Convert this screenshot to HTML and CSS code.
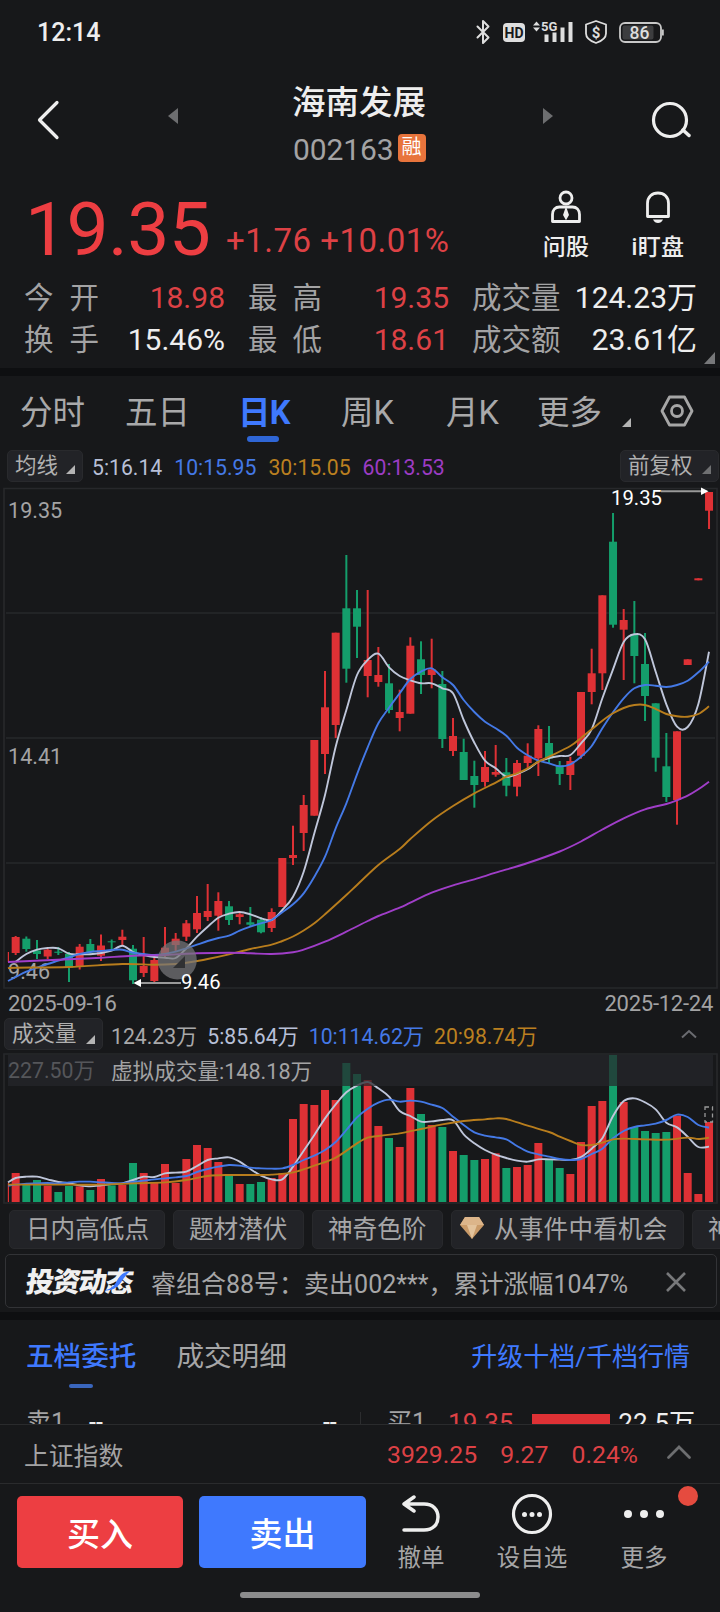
FILE: index.html
```html
<!DOCTYPE html>
<html lang="zh-CN">
<head>
<meta charset="utf-8">
<title>海南发展 002163</title>
<link rel="stylesheet" href="styles.css">
</head>
<body>
<div class="screen">
  <header class="status">
    <span class="clock">12:14</span>
    <svg class="status-icons" width="194" height="40" viewBox="474 12 194 40">
      <path d="M477.500 26.500l11 11-5.500 5.500V21l5.500 5.500-11 11" fill="none" stroke="#dedede" stroke-width="2" stroke-linejoin="round" stroke-linecap="round"/>
      <rect x="503" y="23" width="22" height="19" rx="4" fill="#dedede"/>
      <text x="514" y="38" text-anchor="middle" class="hd">HD</text>
      <path d="M533 25.500l3.500-4 3.500 4zM533 27.500h7l-3.500 4z" fill="#dedede"/>
      <text x="541" y="31" class="g5">5G</text>
      <path d="M544.500 34.500h4v7.500h-4zM552.500 32.500h4v9.500h-4zM560.500 27.500h4v14.500h-4zM568.500 22h4v20h-4z" fill="#dedede"/>
      <path d="M596 21l10 3.500v9c0 4.500-4 7.500-10 9.500-6-2-10-5-10-9.500v-9z" fill="none" stroke="#dedede" stroke-width="1.800" stroke-linejoin="round"/>
      <text x="596" y="38" text-anchor="middle" class="dollar">$</text>
      <rect x="620" y="23" width="41" height="19" rx="5" fill="none" stroke="#c8c8c8" stroke-width="1.800"/>
      <rect x="622.500" y="25.500" width="31" height="14" rx="2" fill="#3c3d3f"/>
      <path d="M662.800 29.500v6" stroke="#c8c8c8" stroke-width="2"/>
      <text x="639.500" y="39" text-anchor="middle" class="batt">86</text>
    </svg>
  </header>

  <nav class="topbar">
    <svg class="back" width="24" height="42" viewBox="0 0 24 42"><path d="M20 3.500L2.500 21 20 38.500" fill="none" stroke="#eee" stroke-width="3.200" stroke-linecap="round" stroke-linejoin="round"/></svg>
    <svg class="prev" width="10" height="16" viewBox="0 0 10 16"><path d="M10 0v16L0 8z" fill="#6d6e70"/></svg>
    <div class="title">
      <h1>海南发展</h1>
      <div class="code"><span>002163</span><b>融</b></div>
    </div>
    <svg class="next" width="10" height="16" viewBox="0 0 10 16"><path d="M0 0v16l10-8z" fill="#6d6e70"/></svg>
    <svg class="search" width="42" height="40" viewBox="0 0 42 40"><circle cx="19" cy="19" r="16.500" fill="none" stroke="#eee" stroke-width="3.200"/><path d="M32 29l6 5.500" stroke="#eee" stroke-width="3.500" stroke-linecap="round"/></svg>
  </nav>

  <section class="quote">
    <span class="price">19.35</span>
    <span class="change">+1.76 +10.01%</span>
    <div class="act ask">
      <svg width="32" height="34" viewBox="0 0 32 34" fill="none" stroke="#eee" stroke-width="2.800"><circle cx="16" cy="8" r="6"/><path d="M2.500 31.500v-7c0-5 3-7.500 7-7.500h13c4 0 7 2.500 7 7.500v7z" stroke-linejoin="round"/><path d="M16 19l2 6-2 3.500-2-3.500z" fill="#eee" stroke-width="1.800"/></svg>
      <span>问股</span>
    </div>
    <div class="act eye">
      <svg width="32" height="34" viewBox="0 0 32 34"><path d="M5.500 26.500V13.500C5.500 7 10 3 16 3s10.500 4 10.500 10.500v13z" fill="none" stroke="#eee" stroke-width="2.800" stroke-linejoin="round"/><path d="M11 29.500h10c-1 2.500-3 3.500-5 3.500s-4-1-5-3.500z" fill="#eee"/></svg>
      <span>i盯盘</span>
    </div>
  </section>

  <section class="stats">
    <span class="k">今<i></i>开</span><span class="v up">18.98</span><span class="k">最<i></i>高</span><span class="v up">19.35</span><span class="k">成交量</span><span class="v">124.23万</span>
    <span class="k">换<i></i>手</span><span class="v">15.46%</span><span class="k">最<i></i>低</span><span class="v up">18.61</span><span class="k">成交额</span><span class="v">23.61亿</span>
    <svg class="corner" width="11" height="12" viewBox="0 0 11 12"><path d="M11 0v12H0z" fill="#77787a"/></svg>
  </section>

  <nav class="periods">
    <a>分时</a><a>五日</a><a class="on">日K</a><a>周K</a><a>月K</a><a class="more">更多</a>
    <svg class="tri" width="9" height="9" viewBox="0 0 9 9"><path d="M9 0v9H0z" fill="#b4b4b4"/></svg>
    <svg class="hex" width="34" height="32" viewBox="0 0 34 32" fill="none" stroke="#a6a6a6" stroke-width="2.800"><path d="M9.500 2h15L32 16l-7.500 14h-15L2 16z" stroke-linejoin="round"/><circle cx="17" cy="16" r="5.500"/></svg>
  </nav>

  <div class="legend ma">
    <span class="pill">均线<svg width="9" height="9" viewBox="0 0 9 9"><path d="M9 0v9H0z" fill="#b4b4b4"/></svg></span>
    <span class="c5">5:16.14</span><span class="c10">10:15.95</span><span class="c30">30:15.05</span><span class="c60">60:13.53</span>
    <span class="pill adj">前复权<svg width="9" height="9" viewBox="0 0 9 9"><path d="M9 0v9H0z" fill="#6f7072"/></svg></span>
  </div>

  <svg class="kchart" id="kchart" width="720" height="509" viewBox="0 484 720 509"></svg>

  <div class="dates"><span>2025-09-16</span><span>2025-12-24</span></div>

  <div class="legend vol">
    <span class="pill">成交量<svg width="9" height="9" viewBox="0 0 9 9"><path d="M9 0v9H0z" fill="#b4b4b4"/></svg></span>
    <span>124.23万</span><span class="c5">5:85.64万</span><span class="c10">10:114.62万</span><span class="c30">20:98.74万</span>
    <svg class="fold" width="18" height="10" viewBox="0 0 18 10"><path d="M2 8.500l7-6.500 7 6.500" fill="none" stroke="#6a6b70" stroke-width="2"/></svg>
  </div>

  <svg class="vchart" id="vchart" width="720" height="153" viewBox="0 1052 720 153"></svg>

  <div class="tags">
    <span class="w5">日内高低点</span><span>题材潜伏</span><span>神奇色阶</span><span class="gem"><svg width="24" height="22" viewBox="0 0 24 22"><path d="M5 0h14l5 8-12 14L0 8z" fill="#c99a68"/><path d="M5 0h14l5 8H0z" fill="#dcb58a"/><path d="M7 8h10l-5 14z" fill="#e3c39c"/></svg>从事件中看机会</span><span>神奇九转</span>
  </div>

  <div class="news">
    <span class="logo">投资动态<svg width="24" height="22" viewBox="0 0 24 22"><path d="M0 20.500C8 19 10 15 12 10c2-5 5-8 11.500-9-4 4-5 7-8 12-3 5-7 7.500-15.500 7.500z" fill="#3f79fe"/></svg></span>
    <span class="msg">睿组合88号：卖出002***，累计涨幅1047%</span>
    <svg width="20" height="20" viewBox="0 0 20 20"><path d="M1 1l18 18M19 1L1 19" stroke="#77787a" stroke-width="2.600"/></svg>
  </div>

  <section class="book">
    <div class="booktabs"><a class="on">五档委托</a><a>成交明细</a><a class="link">升级十档/千档行情</a></div>
    <div class="level">
      <div class="half ask1"><span>卖1</span><em>--</em><em class="qty">--</em></div>
      <i class="rule"></i>
      <div class="half bid1"><span>买1</span><em class="up">19.35</em><i class="bar"></i><em>22.5万</em></div>
    </div>
  </section>

  <div class="index"><span>上证指数</span><b>3929.25</b><b>9.27</b><b>0.24%</b><svg width="26" height="16" viewBox="0 0 26 16"><path d="M2.500 13.500L13 3l10.500 10.500" fill="none" stroke="#6d6e70" stroke-width="2.800" stroke-linecap="round"/></svg></div>

  <footer class="dock">
    <button class="buy">买入</button><button class="sell">卖出</button>
    <div class="item undo"><svg width="42" height="42" viewBox="0 0 42 42" fill="none" stroke="#eee" stroke-width="3.500" stroke-linecap="round" stroke-linejoin="round"><path d="M14 4L4 11l10 7M5 11h19c9 0 14 5.500 14 13s-5 13-14 13H4"/></svg><span>撤单</span></div>
    <div class="item fav"><svg width="42" height="42" viewBox="0 0 42 42"><circle cx="21" cy="21" r="18.500" fill="none" stroke="#eee" stroke-width="3.200"/><circle cx="13.500" cy="21.500" r="2.500" fill="#eee"/><circle cx="21" cy="21.500" r="2.500" fill="#eee"/><circle cx="28.500" cy="21.500" r="2.500" fill="#eee"/></svg><span>设自选</span></div>
    <div class="item etc"><svg width="42" height="42" viewBox="0 0 42 42" fill="#eee"><circle cx="5" cy="21" r="4"/><circle cx="21" cy="21" r="4"/><circle cx="37" cy="21" r="4"/></svg><span>更多</span><i class="dot"></i></div>
  </footer>
  <div class="home"></div>
</div>
<script src="chart.js"></script>
</body>
</html>
```

FILE: styles.css
```css
* { box-sizing: border-box; }
body {
  margin: 0;
  background: #17181a;
  color: #eee;
  font-family: Roboto, "Noto Sans CJK SC", sans-serif;
}
.screen { width: 720px; height: 1612px; overflow: hidden; display: flex; flex-direction: column; background: #17181a; }
.screen > * { flex-shrink: 0; }
i, em { font-style: normal; }
svg { display: block; flex-shrink: 0; }

.status { height: 64px; display: flex; justify-content: space-between; padding: 0 52px 0 37px; }
.clock { font-size: 25px; font-weight: 500; line-height: 66px; }
.status-icons { margin-top: 12px; }
.status text { font-family: Roboto, sans-serif; font-weight: 700; }
.hd { font-size: 14px; fill: #17181a; }
.g5 { font-size: 13px; fill: #dedede; }
.dollar { font-size: 15px; fill: #dedede; }
.status .batt { font-size: 17.500px; font-weight: 500; fill: #dedede; }

.topbar { height: 118px; display: flex; align-items: flex-start; }
.back { margin: 35px 0 0 37px; }
.prev { margin: 44px 0 0 107px; }
.title { width: 134px; margin-left: 115px; }
.title h1 { margin: 17px 0 0 -1px; font-size: 33.5px; font-weight: 500; line-height: 44px; white-space: nowrap; }
.code { display: flex; align-items: center; gap: 4px; margin-top: 8px; height: 32px; color: #a3a3a4; font-size: 30px; letter-spacing: -.1px; }
.code b { width: 28px; height: 28px; border-radius: 4px; background: #e8743c; color: #fff; font-size: 20px; font-weight: 400; line-height: 27px; text-align: center; margin-top: -2px; }
.next { margin: 44px 0 0 116px; }
.search { margin: 37px 0 0 98px; }

.quote { height: 90px; display: flex; align-items: flex-start; color: #ed3e42; white-space: nowrap; }
.price { width: 190px; margin-left: 25px; font-size: 75px; line-height: 94px; letter-spacing: -.6px; }
.change { width: 322px; margin-left: 11px; margin-top: 39px; font-size: 33px; line-height: 40px; letter-spacing: .5px; color: #dd4145; }
.act { display: flex; flex-direction: column; align-items: center; color: #eee; font-size: 23px; font-weight: 500; line-height: 30px; padding-top: 8px; }
.act svg { margin-bottom: 9px; }
.act.ask { width: 36px; }
.act.eye { width: 60px; margin-left: 44px; }
.act span { white-space: nowrap; margin: 0 -20px; letter-spacing: .3px; }

.stats { position: relative; height: 96px; padding: 5px 23px 0 24px; display: grid; grid-template-columns: 76px 125px 99px 125px 115px 133px; grid-template-rows: 42px 42px; line-height: 42px; font-size: 30px; white-space: nowrap; }
.stats .k { color: #a3a3a4; font-size: 29.500px; display: flex; }
.stats .k i { width: 16px; }
.stats .k:nth-child(6n+3) { padding-left: 23px; }
.stats .k:nth-child(6n+3) i { width: 15px; }
.stats .k:nth-child(6n+5) { padding-left: 23px; }
.stats .v { text-align: right; justify-self: end; }
.up { color: #dd4145; }
.corner { position: absolute; right: 5px; bottom: 4px; }

.periods { height: 82px; border-top: 8px solid #0e0f11; display: grid; grid-template-columns: 106px 114px 102px 106px 90px 104px 38px 60px; align-items: start; color: #a9a9aa; font-size: 32.500px; line-height: 74px; white-space: nowrap; }
.periods a:nth-child(1) { padding-left: 20px; }
.periods a:nth-child(2) { padding-left: 19px; }
.periods a:nth-child(3) { padding-left: 18px; }
.periods a:nth-child(4) { padding-left: 19px; }
.periods a:nth-child(5) { padding-left: 18px; }
.periods a:nth-child(6) { padding-left: 19px; }
.periods .on { color: #3f79fe; font-weight: 700; letter-spacing: -.7px; }
.periods .on::after { content: ""; display: block; width: 32px; height: 6px; margin: -14px 0 0 9px; border-radius: 3px; background: #2f66d6; }
.periods .tri { margin: 42px 0 0 0; }
.periods .hex { margin: 19px 0 0 0; }

.legend { display: flex; align-items: flex-start; font-size: 21.200px; white-space: nowrap; color: #a9a9aa; }
.legend .pill { display: flex; align-items: center; justify-content: space-between; background: #222327; border: 1px solid #292a2d; border-radius: 5px; color: #b0b0b0; font-size: 21.500px; }
.legend .pill svg { margin-top: 6px; }
.c5 { color: #b8c0d8; } .c10 { color: #4479e6; } .c30 { color: #bb8020; } .c60 { color: #9c3cc4; }
.ma { height: 34px; padding: 0 1px 0 7px; gap: 12px; line-height: 36px; }
.ma .pill { height: 32px; width: 76px; padding: 0 7px; line-height: 30px; margin-right: -3px; }
.ma .adj { width: 99px; margin: 0 0 0 auto; }

.dates { height: 25px; display: flex; justify-content: space-between; padding: 0 7px 0 8px; font-size: 22px; line-height: 22px; color: #a3a3a4; letter-spacing: -.25px; }
.vol { height: 34px; padding-left: 4px; gap: 10px; line-height: 37px; }
.vol .pill { width: 99px; height: 32px; line-height: 30px; padding: 0 7px; margin-right: -2px; }
.vol .fold { margin: 11px 22px 0 auto; }
.vol .pill svg { margin-top: 10px; }

.tags { height: 49px; padding: 5px 0 0 9px; display: flex; gap: 8px; overflow: hidden; }
.tags span { width: 131px; height: 39px; flex-shrink: 0; padding: 0 0 0 15px; border-radius: 5px; background: #222327; border: 1px solid #28292c; color: #a6a6a7; font-size: 24.600px; line-height: 37px; white-space: nowrap; }
.tags .w5 { width: 156px; padding-left: 16px; }
.tags .gem { display: flex; width: 233px; padding: 0 0 0 8px; letter-spacing: .2px; }
.tags .gem svg { margin: 6px 10px 0 0; }

.news { height: 54px; margin: 0 3px 4px 5px; border: 1.500px solid #323336; border-radius: 5px; display: flex; align-items: center; color: #a6a6a7; padding: 2px 28px 0 20px; }
.logo { position: relative; width: 110px; margin-top: 2px; font-size: 28px; font-weight: 900; color: #f0f0f0; letter-spacing: -1.600px; transform: skewX(-8deg); white-space: nowrap; line-height: 36px; }
.logo svg { position: absolute; left: 79px; top: 5px; }
.msg { margin-left: 15px; width: 515px; font-size: 25px; white-space: nowrap; }

.book { height: 112px; border-top: 8px solid #0e0f11; overflow: hidden; }
.booktabs { display: flex; height: 74px; padding: 0 30px 0 26px; font-size: 27.600px; line-height: 74px; color: #a6a6a7; white-space: nowrap; }
.booktabs a + a { margin-left: 40px; }
.booktabs .on { color: #3f79fe; font-weight: 500; }
.booktabs .on::after { content: ""; display: block; width: 24px; height: 4px; border-radius: 2px; margin: -10px auto 0; background: #3a66bd; }
.booktabs a.link { margin-left: auto; color: #3f79fe; font-size: 26px; }
.level { display: flex; height: 50px; line-height: 58px; font-size: 25px; color: #a3a3a4; white-space: nowrap; }
.half { display: flex; width: 360px; padding-left: 26px; }
.ask1 em { color: #eee; margin-left: 24px; }
.ask1 .qty { margin-left: 220px; }
.rule { width: 1px; margin-top: 18px; background: #2c2d2f; }
.half.bid1 { width: 359px; padding: 0 25px 0 26px; }
.bid1 em { color: #eee; font-size: 26px; }
.bid1 em.up { color: #dd4145; margin-left: 22px; }
.bid1 .bar { width: 78px; height: 24px; margin: 20px 8px 0 auto; background: #de3135; }

.index { height: 60px; border-top: 1.500px solid #2a2b2d; border-bottom: 1.500px solid #2a2b2d; display: flex; align-items: center; padding: 0 28px 0 24px; color: #a3a3a4; font-size: 24.800px; white-space: nowrap; }
.index b { font-weight: 400; color: #dd4145; margin-left: 23px; }
.index span { margin-right: auto; }
.index svg { margin-left: 28px; margin-top: -4px; }

.dock { height: 108px; display: flex; padding: 12px 0 0 17px; }
.dock button { width: 166px; height: 72px; padding: 0; border: 0; border-radius: 5px; font: 500 33px Roboto, "Noto Sans CJK SC", sans-serif; color: #fff; }
.buy { background: #ed3e42; }
.sell { background: #3f79fe; margin-left: 16px; }
.dock .sell { width: 167px; }
.item { position: relative; width: 72px; display: flex; flex-direction: column; align-items: center; font-size: 23.500px; line-height: 32px; color: #a6a6a7; white-space: nowrap; }
.item svg { margin: -3px 0 7px; }
.item.undo { margin-left: 19px; }
.item.fav { margin-left: 39px; }
.item.etc { margin-left: 40px; }
.dot { position: absolute; left: 70px; top: -10px; width: 20px; height: 20px; border-radius: 50%; background: #e54b3f; }
.home { width: 240px; height: 6px; margin: 0 auto; border-radius: 3px; background: #8c8c8d; }

.axis { font-size: 21.600px; fill: #a3a3a4; }
.mark { font-size: 20.300px; fill: #fff; }
.dim { font-size: 21.300px; fill: #55565a; }
```

FILE: chart.js
```js
// Each candle: [direction, body top, body bottom, wick top, wick bottom, volume bar top]
const candles = [
  ['r',937,953,936,955,459],['g',938.7,949,936.5,951.7,493],['g',950.5,954,940,959,480],['r',949.7,956.5,949,959,497],
  ['g',951.7,952.8,947,955,516],['g',953.7,967.7,952,982,498],['r',946.7,966.7,944,969.5,499],['g',944,952.3,939,953.5,510],
  ['r',945.5,955.7,934.5,961,477],['g',941.3,942.3,939.5,949,496],['r',936.7,940,929.7,945,495],['g',948.7,980.3,945,984,429],
  ['r',966,973,937,977,459],['r',960,981,957,982.5,487],['r',947.7,955.7,927,957,432],['r',938.7,945,933,952,489],
  ['r',923.3,936.7,920,941,417],['r',913,929.3,896,933,375],['r',911,917,884,921,384],['r',901,915.7,892.3,930.7,426],
  ['g',906.3,920,901,925,467],['r',914.3,917,913,924.3,492],['g',922.3,924.7,907,926.7,492],['g',919.7,932.3,917,933.3,486],
  ['r',912,928,908.3,932,474],['r',858,907,858,907,460],['r',855,858,825.7,865,297],['r',805,833,795,851,252],
  ['r',740,815.7,740,815.7,255],['r',707.3,754,671,774,210],['r',632.7,725,632.7,738,240],['g',608.3,668.7,555,682.7,129],
  ['g',608.3,626.7,590,658,162],['r',660,676,590,697.3,180],['r',675,682,647,686.7,318],['g',683.3,710,664,713.3,354],
  ['r',712,718,689.7,731.3,381],['r',645.7,713.7,637.3,713.7,204],['g',659.3,675,641.3,694,282],['r',669.3,675,638.7,688.3,315],
  ['g',684,739,671,748,321],['r',736,751,718,756,393],['g',752,780,738.7,780,405],['g',776,785,760.7,807.7,420],
  ['r',767,782,751,786.7,417],['r',772,774.7,745,776.7,400],['g',772.3,785.7,758,796.3,444],['r',763,786.7,760,796.3,441],
  ['r',755.7,763,743.3,768.7,435],['r',729,758.3,725.3,776,369],['g',743,758.3,726,763.3,420],['g',765.3,774,761,785,444],
  ['r',761,775,756.7,790,462],['r',692,755.7,692,758.7,366],['r',673.3,692,648.7,704.3,258],['r',595.3,673.3,595.3,690,243],
  ['g',541.7,624.7,513,627.7,105],['r',620,629.7,609,680,246],['g',634.3,656,601,683.3,321],['g',664,696,633,721,333],
  ['g',703.3,757.7,703.3,771.7,339],['g',766.3,797,733,802,336],['r',731.3,800,731.3,824.7,287],['r',659.3,665,659.3,665,459],
  ['r',578.3,580.3,578.3,580.3,522],['r',492,510.7,492,529,306]
];
const RED = '#de3135', GREEN = '#149e6b';
const X = k => 15.67 + k * 10.667;

// Catmull-Rom smoothing through [index, y] pairs
function curve(pts, color) {
  const p = pts.map(([k, y]) => [k < 0 ? 8 : X(k), y]);
  let d = `M${p[0][0]} ${p[0][1]}`;
  for (let i = 0; i < p.length - 1; i++) {
    const a = p[i - 1] || p[i], b = p[i], c = p[i + 1], e = p[i + 2] || c;
    d += `C${b[0] + (c[0] - a[0]) / 6} ${b[1] + (c[1] - a[1]) / 6} ${c[0] - (e[0] - b[0]) / 6} ${c[1] - (e[1] - b[1]) / 6} ${c[0]} ${c[1]}`;
  }
  return `<path d="${d}" fill="none" stroke="${color}" stroke-width="1.9"/>`;
}
const seq = ys => ys.map((y, i) => [i - 1, y]);
const WHITE = '#bfc6da', BLUE = '#4479e6', ORANGE = '#b87d1d', PURPLE = '#a03ec8';

const ma5 = seq([965,961.7,954,949.7,948,948.3,953.7,954.3,954.3,953,950.7,945.7,952,955,957,957.7,958,948.3,936.7,926.7,917.7,913.7,912,914.3,918.3,920,910,896.7,871.7,833.3,795,746.7,710,675,660,653.7,667.3,676,680.3,683.3,683.3,688.3,693.3,720,742.7,760.7,768.3,776.7,774,769.3,761.7,758,756,755,743.3,729.3,698.3,669.3,642,634.3,639.3,671.7,704.3,726.7,727,704,651.7]).slice(1);
const ma10 = seq([981,977,971.7,967.7,964,960.7,957.3,954,952,951,950,949.7,952.7,954,955,954,951.7,948.3,944.7,941,938,935.7,930.7,926.7,923.3,920,912.3,904.3,893.3,876.7,856.7,828.3,803.3,774.3,747.3,723.3,707.7,693.3,679,671.7,668.3,677.3,685,700,712,721.7,728.3,735.7,747.7,755.3,760.7,763.3,766.3,764.3,756.7,746,728.3,712.3,698.3,688.3,685,685.7,687,685,680.7,672.3,661.7]);
const ma30 = [[-1,968.3],[0,967.7],[5,967],[10,964],[13,964.7],[15,964],[16,962.7],[17,961],[18,959],[20,954.3],[22,949],[24,944.7],[25,941],[26,936.5],[27,930.5],[28,923.3],[29,914.3],[31,895],[32,885],[34,865],[36,849],[37,839],[39,820.7],[41,806],[43,793.3],[45,782.7],[46,776.7],[47,773.3],[48,768.3],[49,761.7],[50,756.7],[52,746],[53,738],[54,729.3],[55,720.7],[56,713.3],[57,708],[58,705],[59,705],[60,709],[61,714],[62,716.3],[63,716.7],[64,714],[65,706.3]];
const ma60 = [[-1,962],[5,959.3],[8,957.7],[11,955.7],[14,955],[17,953.3],[20,952.7],[22,953.3],[24,954],[26,952.3],[27,949.7],[29,941.7],[31,931.7],[33,921],[34,916],[36,907.7],[37,902.7],[39,892.7],[41,885.3],[43,879.3],[45,872.7],[48,863],[51,851.5],[53,841.5],[55,829.5],[57,818.3],[59,809.3],[61,804],[62,800.3],[63,795.7],[64,789.3],[65,781.7]];

let k = `<g fill="none" stroke="#27282b" stroke-width="1.7"><path d="M4 488.5H717V988H4zM6 613H715M6 738H715M6 863H715"/></g>
<rect x="7.800" y="952" width="1.200" height="10" fill="${RED}"/>`;
candles.forEach(([c, t, b, wt, wb], i) => {
  const x = X(i), f = c === 'r' ? RED : GREEN;
  k += `<rect x="${x - 1}" y="${wt}" width="2" height="${wb - wt}" fill="${f}"/><rect x="${x - 4}" y="${t}" width="8" height="${b - t}" fill="${f}"/>`;
});
k += `<text x="8" y="518" class="axis">19.35</text><text x="8" y="764" class="axis">14.41</text><text x="8" y="979" class="axis">9.46</text>`;
k += curve(ma5, WHITE) + curve(ma10, BLUE) + curve(ma30, ORANGE) + curve(ma60, PURPLE);
k += `<circle cx="177.300" cy="960" r="19.500" fill="#77777a" fill-opacity=".72"/><path d="M185 956v12h-12z" fill="#303133"/>
<path d="M661 491.300H702" stroke="#999" stroke-width="2"/><path d="M701 487.500l7.500 3.800-7.500 3.800z" fill="#fff"/><text x="611" y="505" class="mark">19.35</text>
<path d="M140 983H181" stroke="#999" stroke-width="2"/><path d="M141 979l-7.500 4 7.500 4z" fill="#fff"/><text x="181" y="989" class="mark">9.46</text>`;
document.getElementById('kchart').innerHTML = k;

const V = y => 1020 + y / 3;
const vs = a => a.map(([i, y]) => [i, V(y)]);
const v5 = seq([487,474,470,470,478,486,490,496,499,496,492,490,480,470,471,460,458,455,438,420,415,412,425,447,467,478,478,440,392,345,295,253,217,197,186,205,230,273,288,305,304,300,301,343,370,390,404,414,422,425,418,418,419,420,411,386,355,288,243,235,247,268,308,322,350,381,380]);
const v10 = seq([497,494,491,490,489,490,487,485,485,487,489,490,486,482,478,475,472,468,456,447,440,435,437,443,445,446,445,435,420,407,390,366,330,292,266,248,239,245,242,245,254,264,290,315,337,347,352,358,378,395,403,410,417,420,417,402,386,355,333,321,316,311,300,284,291,315,323]);
const v20 = [[-1,494],[5,494],[8,494],[11,490],[14,487],[16,480],[18,468],[20,465],[22,465],[24,464],[26,457],[28,437],[30,413],[32,370],[33,353],[34,348],[36,340],[38,327],[40,313],[42,303],[44,298],[45,295],[46,297],[48,317],[50,336],[51,350],[52,363],[53,375],[54,375],[55,368],[56,358],[57,356],[59,358],[61,359],[63,353],[64,357],[65,353]];
let v = `<path d="M4 1054H717V1203H4z" fill="none" stroke="#27282b" stroke-width="1.700"/><rect x="7.800" y="1183" width="1.200" height="19" fill="${RED}"/>`;
candles.forEach((c, i) => {
  v += `<rect x="${X(i) - 4}" y="${V(c[5])}" width="8" height="${1202 - V(c[5])}" fill="${c[0] === 'r' ? RED : GREEN}"/>`;
});
v += curve(vs(v5), WHITE) + curve(vs(v10), BLUE) + curve(vs(v20), ORANGE);
v += `<rect x="705" y="1107" width="7.500" height="15" fill="none" stroke="#999" stroke-width="1.300" stroke-dasharray="4 3"/>
<rect x="8" y="1055" width="705" height="31" fill="#26272b" fill-opacity=".72"/>
<text x="8" y="1078" class="axis dim">227.50万</text><text x="111" y="1079" class="axis">虚拟成交量:148.18万</text>`;
document.getElementById('vchart').innerHTML = v;
```
